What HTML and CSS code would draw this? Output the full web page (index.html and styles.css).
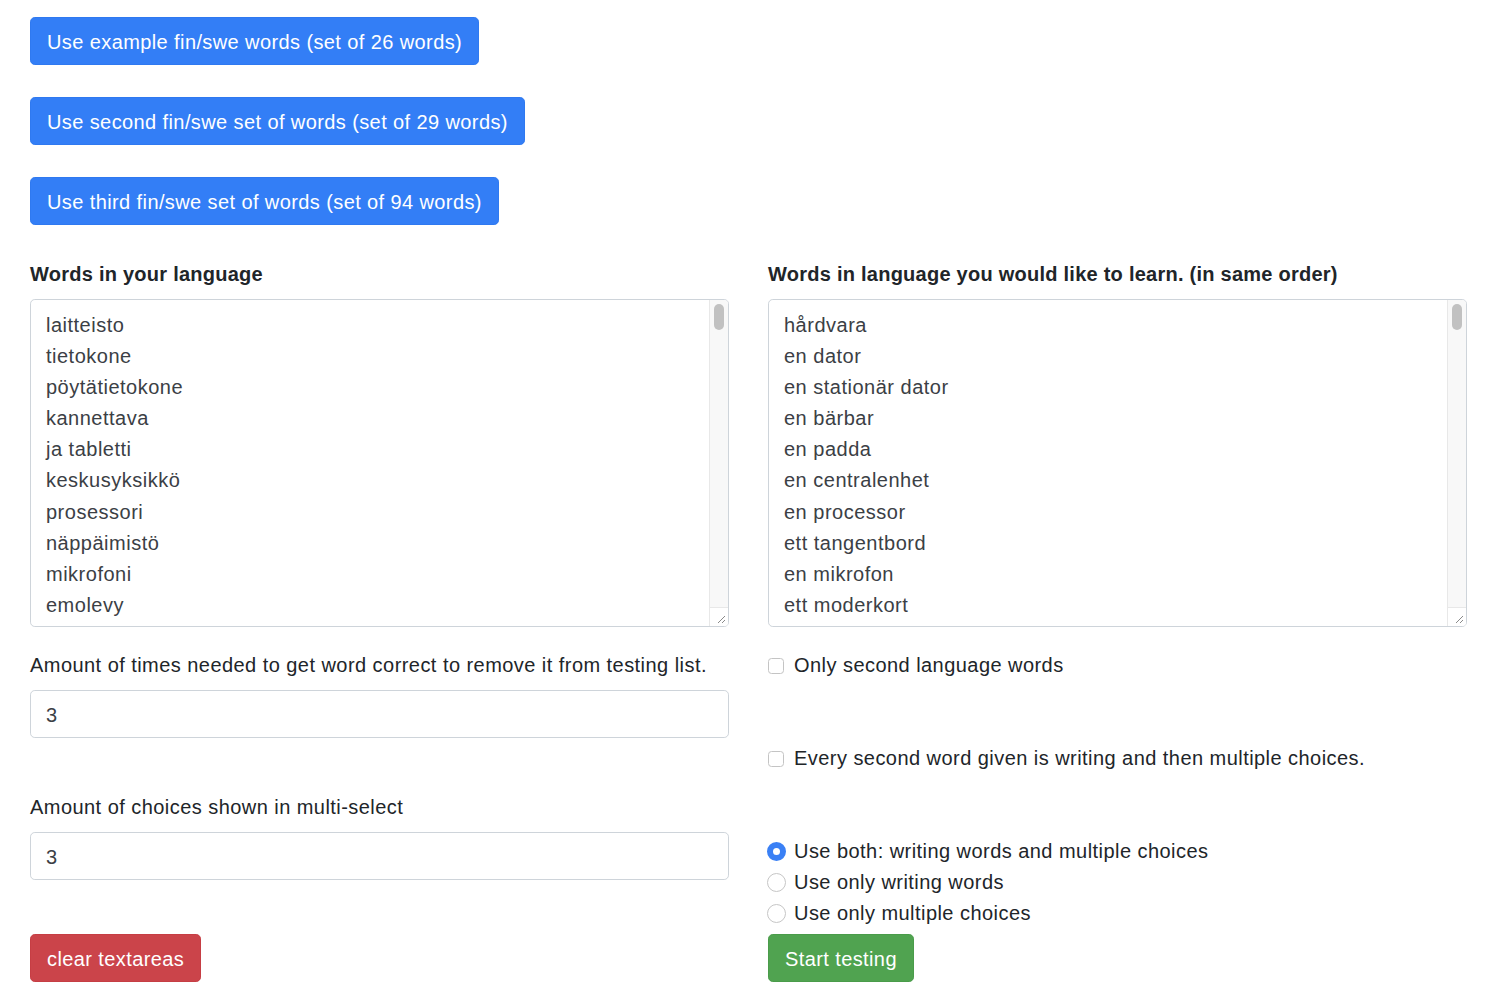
FILE: index.html
```html
<!DOCTYPE html>
<html lang="en">
<head>
<meta charset="utf-8">
<title>Word tester</title>
<link rel="stylesheet" href="styles.css">
</head>
<body>
<div class="page">
  <div class="presets">
    <button class="btn btn-primary" type="button">Use example fin/swe words (set of 26 words)</button>
    <button class="btn btn-primary" type="button">Use second fin/swe set of words (set of 29 words)</button>
    <button class="btn btn-primary" type="button">Use third fin/swe set of words (set of 94 words)</button>
  </div>

  <div class="columns">
    <div class="col">
      <label class="title" for="own">Words in your language</label>
      <div class="ta-wrap">
        <textarea id="own" class="ta">laitteisto
tietokone
pöytätietokone
kannettava
ja tabletti
keskusyksikkö
prosessori
näppäimistö
mikrofoni
emolevy
ruutu
hiiri
kovalevy</textarea>
        <div class="sb"><div class="sb-thumb"></div><div class="sb-grip"><svg width="9" height="9" viewBox="0 0 9 9"><path d="M1 8 L8 1 M5 8 L8 5" stroke="#8a8a8a" stroke-width="1" fill="none"/></svg></div></div>
      </div>

      <label class="field-label first" for="times">Amount of times needed to get word correct to remove it from testing list.</label>
      <input id="times" class="input" type="text" value="3">

      <label class="field-label second" for="choices">Amount of choices shown in multi-select</label>
      <input id="choices" class="input" type="text" value="3">

      <div class="actions">
        <button class="btn btn-danger" type="button">clear textareas</button>
      </div>
    </div>

    <div class="col">
      <label class="title" for="learn">Words in language you would like to learn. (in same order)</label>
      <div class="ta-wrap">
        <textarea id="learn" class="ta">hårdvara
en dator
en stationär dator
en bärbar
en padda
en centralenhet
en processor
ett tangentbord
en mikrofon
ett moderkort
en skärm
en mus
en hårddisk</textarea>
        <div class="sb"><div class="sb-thumb"></div><div class="sb-grip"><svg width="9" height="9" viewBox="0 0 9 9"><path d="M1 8 L8 1 M5 8 L8 5" stroke="#8a8a8a" stroke-width="1" fill="none"/></svg></div></div>
      </div>

      <label class="check first-check"><input type="checkbox" class="cb"><span>Only second language words</span></label>
      <label class="check second-check"><input type="checkbox" class="cb"><span>Every second word given is writing and then multiple choices.</span></label>

      <div class="radios">
        <label class="check"><input type="radio" name="mode" class="rb" checked><span>Use both: writing words and multiple choices</span></label>
        <label class="check"><input type="radio" name="mode" class="rb"><span>Use only writing words</span></label>
        <label class="check"><input type="radio" name="mode" class="rb"><span>Use only multiple choices</span></label>
      </div>

      <div class="actions start">
        <button class="btn btn-success" type="button">Start testing</button>
      </div>
    </div>
  </div>
</div>
</body>
</html>
```

FILE: styles.css
```css
html, body {
  margin: 0;
  padding: 0;
  background: #ffffff;
}

body {
  font-family: "Liberation Sans", Arial, Helvetica, sans-serif;
  font-size: 20px;
  letter-spacing: 0.45px;
  color: #212529;
}

.page {
  padding: 17px 33px 0 30px;
}

.presets {
  display: flex;
  flex-direction: column;
  align-items: flex-start;
  gap: 32px;
}

.btn {
  font-family: inherit;
  font-size: 20px;
  letter-spacing: 0.4px;
  line-height: 30px;
  height: 48px;
  padding: 1px 16px 0;
  border: 1px solid transparent;
  border-radius: 4.8px;
  color: #ffffff;
  cursor: pointer;
  white-space: nowrap;
}

.btn-primary {
  background: #337ef6;
  border-color: #2f79f0;
}

.btn-danger {
  background: #cb444a;
  border-color: #c63e44;
}

.btn-success {
  background: #50a350;
  border-color: #4a9c4a;
}

.columns {
  display: grid;
  grid-template-columns: 1fr 1fr;
  column-gap: 39px;
  margin-top: 33px;
}

.col {
  display: flex;
  flex-direction: column;
  align-items: stretch;
  min-width: 0;
}

.title {
  display: block;
  font-weight: bold;
  letter-spacing: 0.25px;
  line-height: 31px;
  padding-top: 1px;
  margin-bottom: 9px;
}

.ta-wrap {
  position: relative;
  height: 328px;
}

.ta {
  display: block;
  box-sizing: border-box;
  width: 100%;
  height: 328px;
  margin: 0;
  padding: 10px 16px 8px 15px;
  border: 1px solid #ced4da;
  border-radius: 4.8px;
  font-family: inherit;
  font-size: 20px;
  letter-spacing: 0.5px;
  line-height: 31.1px;
  color: #3b4045;
  resize: none;
  overflow: hidden;
  background: #ffffff;
}

.sb {
  position: absolute;
  top: 1px;
  right: 1px;
  bottom: 1px;
  width: 18px;
  background: #f8f8f8;
  border-left: 1px solid #e8e8e8;
  border-radius: 0 4px 4px 0;
}

.sb-thumb {
  position: absolute;
  top: 4px;
  left: 4px;
  width: 10px;
  height: 26px;
  border-radius: 5px;
  background: #c1c1c1;
}

.sb-grip {
  position: absolute;
  left: 0;
  right: 0;
  bottom: 0;
  height: 19px;
  border-top: 1px solid #e8e8e8;
  background: #ffffff;
  border-radius: 0 0 4px 0;
  display: flex;
  align-items: flex-end;
  justify-content: flex-end;
  padding: 0 2px 2px 0;
  box-sizing: border-box;
}

.field-label {
  display: block;
  line-height: 31px;
  padding-top: 1px;
  margin-bottom: 9px;
}

.field-label.first {
  margin-top: 22px;
}

.field-label.second {
  margin-top: 53px;
}

.input {
  display: block;
  box-sizing: border-box;
  width: 100%;
  height: 48px;
  margin: 0;
  padding: 2px 16px 0 15px;
  border: 1px solid #ced4da;
  border-radius: 4.8px;
  font-family: inherit;
  font-size: 20px;
  color: #3b4045;
  background: #ffffff;
}

.actions {
  display: flex;
  margin-top: 54px;
}

.actions.start {
  margin-top: 6px;
}

.check {
  display: flex;
  align-items: center;
  height: 31px;
  line-height: 31px;
}

.check span {
  padding-top: 2px;
}

.first-check {
  margin-top: 22px;
}

.second-check {
  margin-top: 62px;
}

.radios {
  display: flex;
  flex-direction: column;
  margin-top: 62px;
}

.cb {
  appearance: none;
  -webkit-appearance: none;
  width: 16px;
  height: 16px;
  margin: 2px 10px 0 0;
  border: 1px solid #c4c4c4;
  border-radius: 3.5px;
  background: #ffffff;
  flex: none;
}

.rb {
  appearance: none;
  -webkit-appearance: none;
  box-sizing: border-box;
  width: 19px;
  height: 19px;
  margin: 2px 8px 0 -1px;
  border: 1px solid #c6c6c6;
  border-radius: 50%;
  background: #ffffff;
  flex: none;
}

.rb:checked {
  border: 6px solid #3a80f5;
  background: #ffffff;
}
```
